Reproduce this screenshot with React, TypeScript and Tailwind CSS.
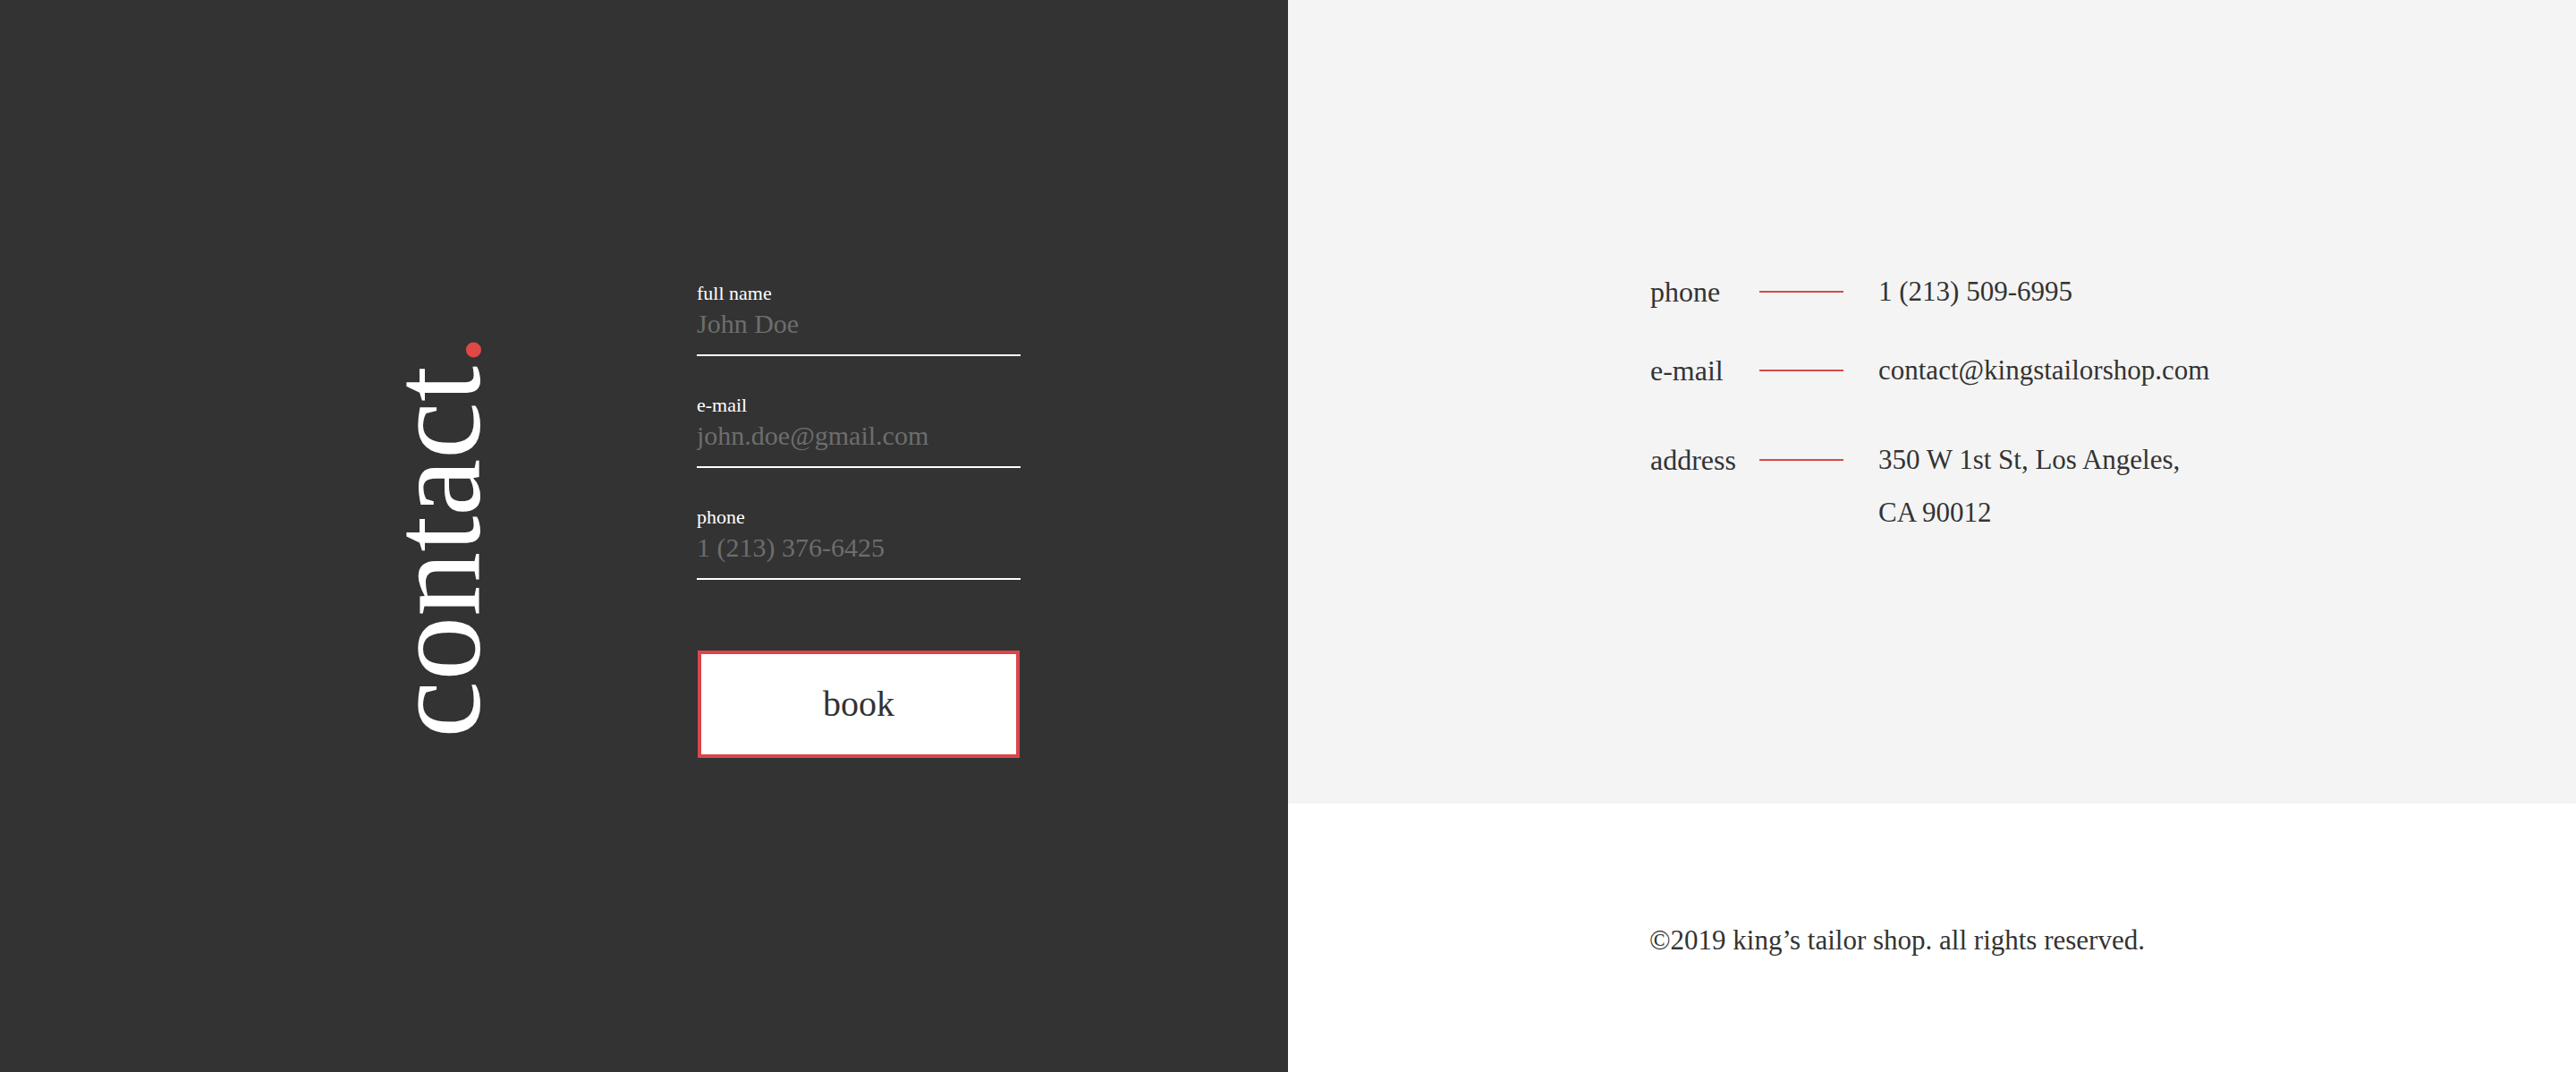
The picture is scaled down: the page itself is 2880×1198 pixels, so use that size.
import React from "react";

function Field({ label, placeholder, type = "text" }: { label: string; placeholder: string; type?: string }) {
    return (
        <div className="flex flex-col w-[362px]">
            <label className="text-[22px] leading-[26px] text-white">{label}</label>
            <input
                type={type}
                placeholder={placeholder}
                className="mt-[3px] h-[36px] pb-0 bg-transparent text-[30px] leading-[36px] text-white placeholder:text-[#6d6d6d] outline-none"
            />
            <div className="mt-[16px] h-[2px] bg-white" />
        </div>
    );
}

function InfoRow({ label, children, className = "" }: { label: string; children: React.ReactNode; className?: string }) {
    return (
        <div className={`flex items-start ${className}`}>
            <div className="flex items-center h-[59px]">
                <span className="w-[122px] text-[32px] text-[#333333]">{label}</span>
                <span className="w-[94px] h-[2px] bg-[#d94848]" />
            </div>
            <div className="ml-[39px] text-[31px] leading-[59px] text-[#333333]">{children}</div>
        </div>
    );
}

export default function App() {
    return (
        <div className="flex w-[2880px] h-[1198px] font-['Liberation_Serif',serif]">
            {/* left: dark booking panel */}
            <div className="w-[1440px] h-full bg-[#333333] flex items-center pl-[416px]">
                <div className="[writing-mode:vertical-rl] rotate-180 text-[144px] leading-none text-white">
                    contact<span className="text-[#e04848]">.</span>
                </div>
                <form className="ml-[219px] mb-[37px] flex flex-col gap-[42px]" onSubmit={(e) => e.preventDefault()}>
                    <Field label="full name" placeholder="John Doe" />
                    <Field label="e-mail" placeholder="john.doe@gmail.com" type="email" />
                    <Field label="phone" placeholder="1 (213) 376-6425" />
                    <button
                        type="submit"
                        className="mt-[37px] ml-[1px] w-[360px] h-[120px] bg-white border-[4px] border-[#d9474a] text-[40px] text-[#333333]"
                    >
                        book
                    </button>
                </form>
            </div>

            {/* right: info + footer */}
            <div className="w-[1440px] h-full flex flex-col">
                <div className="h-[898px] bg-[#f4f4f4] flex items-center pl-[405px]">
                    <div className="flex flex-col">
                        <InfoRow label="phone">1 (213) 509-6995</InfoRow>
                        <InfoRow label="e-mail" className="mt-[29px]">contact@kingstailorshop.com</InfoRow>
                        <InfoRow label="address" className="mt-[41px]">
                            350 W 1st St, Los Angeles,
                            <br />
                            CA 90012
                        </InfoRow>
                    </div>
                </div>
                <div className="flex-1 bg-white flex items-center pl-[404px] pt-[6px]">
                    <p className="text-[31px] leading-[36px] text-[#333333]">©2019 king’s tailor shop. all rights reserved.</p>
                </div>
            </div>
        </div>
    );
}
